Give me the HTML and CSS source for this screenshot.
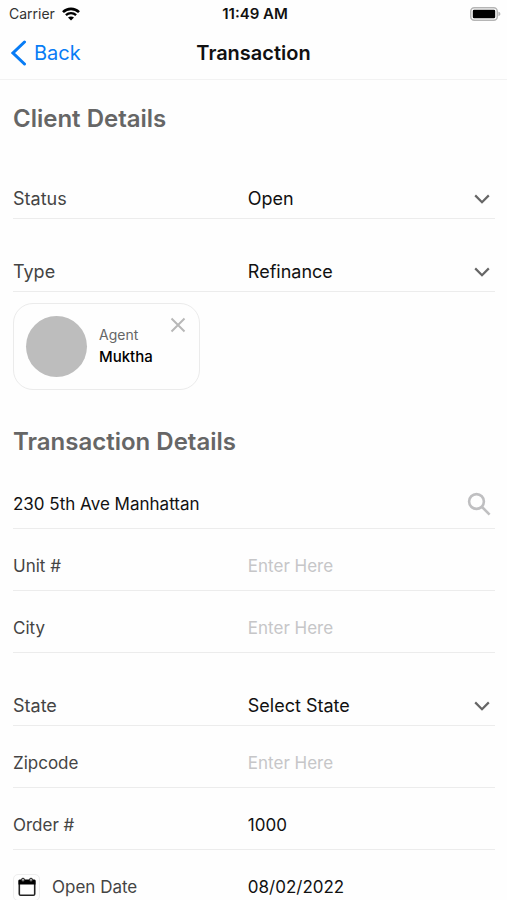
FILE: index.html
```html
<!DOCTYPE html>
<html lang="en">
<head>
<meta charset="utf-8">
<meta name="viewport" content="width=device-width, initial-scale=1">
<title>Transaction</title>
<link rel="stylesheet" href="styles.css">
</head>
<body>
<div class="status-bar">
  <div class="carrier">
    <span>Carrier</span>
    <svg class="wifi" viewBox="0 0 18 14" aria-hidden="true">
      <path d="M1 5.2C5.4.8 12.6.8 17 5.2" fill="none" stroke="#000" stroke-width="2.6"/>
      <path d="M3.9 8.2c2.9-2.8 7.3-2.8 10.2 0" fill="none" stroke="#000" stroke-width="2.3"/>
      <path d="M6 10.6c1.7-1.6 4.3-1.6 6 0L9 13.6z"/>
    </svg>
  </div>
  <time class="clock">11:49 AM</time>
  <svg class="battery" viewBox="0 0 31 14" aria-hidden="true">
    <rect x=".75" y=".75" width="26.5" height="12.5" rx="3.5" fill="#fff" stroke="#b5b5b5" stroke-width="1.5"/>
    <rect x="2.8" y="2.7" width="22.4" height="8.6" rx="1.4"/>
    <path d="M28.4 4.8c2.6.6 2.6 3.8 0 4.4z" fill="#b5b5b5"/>
  </svg>
</div>
<header class="nav">
  <a class="back" href="#">
    <svg viewBox="0 0 16 26" aria-hidden="true"><path d="M13.5 2 2 13l11.5 11" fill="none" stroke="currentColor" stroke-width="3" stroke-linecap="round"/></svg>
    <span>Back</span>
  </a>
  <h1>Transaction</h1>
</header>
<main>
  <section class="client">
    <h2>Client Details</h2>
    <div class="row row-select">
      <label for="status">Status</label>
      <select id="status"><option>Open</option></select>
      <svg class="chevron" viewBox="0 0 16 10" aria-hidden="true"><path d="m1.2 1.4 6.8 6.8 6.8-6.8"/></svg>
    </div>
    <div class="row row-select">
      <label for="type">Type</label>
      <select id="type"><option>Refinance</option></select>
      <svg class="chevron" viewBox="0 0 16 10" aria-hidden="true"><path d="m1.2 1.4 6.8 6.8 6.8-6.8"/></svg>
    </div>
    <article class="agent">
      <div class="avatar"></div>
      <div class="agent-text">
        <span class="role">Agent</span>
        <strong>Muktha</strong>
      </div>
      <button class="remove" type="button" aria-label="Remove agent">
        <svg viewBox="0 0 16 16" aria-hidden="true"><path d="m1.5 1.5 13 13m0-13-13 13" fill="none" stroke="currentColor" stroke-width="2"/></svg>
      </button>
    </article>
  </section>
  <section class="transaction">
    <h2>Transaction Details</h2>
    <div class="row row-search">
      <input type="text" aria-label="Address" value="230 5th Ave Manhattan">
      <button class="search" type="button" aria-label="Search address">
        <svg viewBox="0 0 24 24" aria-hidden="true"><circle cx="9.5" cy="9.5" r="7.4"/><path d="m15 15 7.6 7.6"/></svg>
      </button>
    </div>
    <div class="row">
      <label for="unit">Unit #</label>
      <input id="unit" type="text" placeholder="Enter Here">
    </div>
    <div class="row">
      <label for="city">City</label>
      <input id="city" type="text" placeholder="Enter Here">
    </div>
    <div class="row row-select">
      <label for="state">State</label>
      <select id="state"><option>Select State</option></select>
      <svg class="chevron" viewBox="0 0 16 10" aria-hidden="true"><path d="m1.2 1.4 6.8 6.8 6.8-6.8"/></svg>
    </div>
    <div class="row">
      <label for="zip">Zipcode</label>
      <input id="zip" type="text" placeholder="Enter Here">
    </div>
    <div class="row">
      <label for="order">Order #</label>
      <input id="order" type="text" value="1000">
    </div>
    <div class="row">
      <label class="date-label" for="open-date">
        <span class="calendar">
          <svg viewBox="0 0 18 20" aria-hidden="true"><path d="M1.3 4h15.4v13a1.3 1.3 0 0 1-1.3 1.3H2.6A1.3 1.3 0 0 1 1.3 17z" fill="none" stroke="#222" stroke-width="1.6"/><path d="M.5 4q0-1.4 1.4-1.4h14.2q1.4 0 1.4 1.4v3.4H.5z"/><circle cx="5" cy="2.8" r="1.6" fill="#aaa" stroke="#222"/><circle cx="13" cy="2.8" r="1.6" fill="#aaa" stroke="#222"/></svg>
        </span>
        Open Date
      </label>
      <input id="open-date" type="text" value="08/02/2022">
    </div>
  </section>
</main>
</body>
</html>
```
FILE: styles.css
```css
* {
  box-sizing: border-box;
}

html {
  scrollbar-width: none;
}

body {
  margin: 0;
  background: #fefefe;
  color: #111;
  font: 17px/20px Inter, "Liberation Sans", sans-serif;
}

svg {
  display: block;
}

button,
input,
select {
  margin: 0;
  padding: 0;
  border: 0;
  background: none;
  color: inherit;
  font: inherit;
  line-height: 20px;
  appearance: none;
}

.status-bar {
  display: grid;
  grid-template-columns: 1fr auto 1fr;
  align-items: center;
  height: 27px;
  padding: 0 6px 0 9px;
  font-size: 14px;
}

.carrier {
  display: flex;
  align-items: center;
  gap: 7px;
  color: #333;
}

.wifi {
  width: 18px;
  height: 14px;
}

.clock {
  font-size: 15px;
  font-weight: 600;
}

.battery {
  width: 31px;
  height: 14px;
  justify-self: end;
}

.nav {
  display: grid;
  grid-template-columns: 1fr auto 1fr;
  align-items: center;
  height: 53px;
  padding: 0 11px;
  border-bottom: 1px solid #f2f2f2;
}

.back {
  display: flex;
  align-items: center;
  gap: 7px;
  color: #087cf5;
  font-size: 20px;
  text-decoration: none;
}

.back svg {
  width: 16px;
  height: 26px;
}

h1 {
  margin: 0;
  font-size: 20px;
  font-weight: 600;
}

main {
  padding: 0 12px 0 13px;
}

h2 {
  margin: 0;
  color: #666;
  font-size: 24px;
  font-weight: 600;
  line-height: 28px;
}

.client h2 {
  padding: 25px 0 13px;
}

.transaction h2 {
  padding: 38px 0 11px;
}

.row {
  position: relative;
  display: grid;
  grid-template-columns: 19fr 20fr;
  padding: 27px 0 14px;
  border-bottom: 1px solid #ececec;
}

.row label {
  color: #444;
}

.row input,
.row select {
  width: 100%;
  min-width: 0;
  height: 20px;
  outline: 0;
  padding-left: 0;
}

.row input::placeholder {
  color: #c6c6c8;
  opacity: 1;
}

.row-select {
  padding: 43px 0 9px;
  font-size: 18px;
}

.chevron {
  position: absolute;
  right: 5px;
  bottom: 14px;
  width: 16px;
  height: 10px;
  fill: none;
  stroke: #666;
  stroke-width: 2.2;
  pointer-events: none;
}

.row-search {
  grid-template-columns: 1fr auto;
}

.search {
  height: 20px;
  margin-right: 4px;
}

.search svg {
  width: 24px;
  height: 24px;
  margin-top: -2px;
  fill: none;
  stroke: #bfbfc1;
  stroke-width: 2.6;
}

.agent {
  display: flex;
  align-items: flex-start;
  width: 187px;
  margin-top: 11px;
  padding: 12px;
  border: 1px solid #ebebeb;
  border-radius: 20px;
}

.avatar {
  width: 61px;
  height: 61px;
  border-radius: 50%;
  background: #bdbdbd;
}

.agent-text {
  display: flex;
  flex: 1;
  flex-direction: column;
  gap: 2px;
  padding: 9px 0 0 12px;
  font-size: 15px;
}

.role {
  color: #666;
  font-size: 14px;
}

.agent-text strong {
  color: #000;
  font-weight: 500;
}

.remove {
  margin-right: 1px;
  padding-top: 1px;
  color: #b8b8b8;
}

.remove svg {
  width: 16px;
  height: 16px;
}

.date-label {
  display: flex;
  align-items: center;
  gap: 12px;
  height: 20px;
}

.calendar {
  display: grid;
  flex: none;
  place-items: center;
  width: 27px;
  height: 27px;
  border: 1px solid #eee;
  border-radius: 5px;
}

.calendar svg {
  width: 18px;
  height: 20px;
}
```
